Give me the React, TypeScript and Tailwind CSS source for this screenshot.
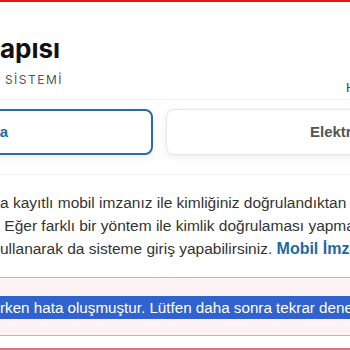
import React from "react";

// text whose start is cut off by the left edge of the page
function Cut({
  hidden,
  children,
  className = "",
}: {
  hidden: string;
  children: React.ReactNode;
  className?: string;
}) {
  return (
    <div className={`flex whitespace-pre ${className}`}>
      <span className="flex w-0 min-w-0 shrink-0 justify-end">
        <span className="shrink-0">{hidden}</span>
      </span>
      <span className="shrink-0">{children}</span>
    </div>
  );
}

export default function App() {
  return (
    <div className="w-[350px] h-[350px] overflow-hidden bg-white font-['Liberation_Sans',Arial,sans-serif]">
      <div className="h-[2px] bg-[#e3141c]" />

      {/* header */}
      <header className="flex items-start pt-[32px] pb-[3px] border-b border-[#f2f2f2]">
        <div className="w-[346px] shrink-0">
          <Cut
            hidden="e-Devlet K"
            className="font-['Inter',sans-serif] text-[26px] font-bold leading-[30px] text-[#111]"
          >
            apısı
          </Cut>
          <Cut
            hidden="KİMLİK DOĞRULAMA"
            className="mt-[8px] font-['Inter',sans-serif] text-[12px] leading-[16px] tracking-[1.5px] text-[#555]"
          >
            {" SİSTEMİ"}
          </Cut>
        </div>
        <div className="mt-[46px] shrink-0 whitespace-nowrap text-[13px] leading-[16px] text-[#444]">
          Hızlı Çözüm
        </div>
      </header>

      {/* login method tabs */}
      <div className="mt-[9px] pb-[19px] border-b border-[#efefef]">
        <div className="flex gap-[13px]">
          <div className="-ml-[227px] w-[380px] h-[46px] shrink-0 flex items-center justify-end pr-[143px] rounded-lg border-2 border-[#2c6aa2] bg-white shadow-[0_2px_8px_rgba(0,0,0,0.08)]">
            <span className="whitespace-nowrap text-[15px] font-bold text-[#1f68a6]">Mobil İmza</span>
          </div>
          <div className="w-[380px] h-[46px] shrink-0 flex items-center pl-[143px] rounded-lg border border-[#e6e6e6] bg-white shadow-[0_2px_8px_rgba(0,0,0,0.08)]">
            <span className="whitespace-nowrap text-[15px] font-bold text-[#555]">Elektronik İmza</span>
          </div>
        </div>
      </div>

      {/* info text */}
      <div className="pt-[16px] text-[15.5px] leading-[23px] text-[#333]">
        <Cut hidden="cep telefonunuz">a kayıtlı mobil imzanız ile kimliğiniz doğrulandıktan sonra</Cut>
        <Cut hidden="sonra sisteme giriş yapılacaktır.">
          {" Eğer farklı bir yöntem ile kimlik doğrulaması yapmak istiyorsanız"}
        </Cut>
        <Cut hidden="k">
          ullanarak da sisteme giriş yapabilirsiniz.{" "}
          <b className="text-[16px] text-[#1f68a6]">Mobil İmza</b>
        </Cut>
      </div>

      {/* error */}
      <div className="mt-[17px] border-y border-[#e6a3a9] bg-[#fdf3f4] pt-[18px] pb-[16px]">
        <div className="bg-[#3063cd] text-[15.2px] leading-[23px] text-white">
          <Cut hidden="İşlem yapılı">rken hata oluşmuştur. Lütfen daha sonra tekrar deneyiniz.</Cut>
        </div>
      </div>
      <div className="mt-[12px] h-[20px] border-t-2 border-[#d8747d] bg-[#fdf3f4]" />
    </div>
  );
}
